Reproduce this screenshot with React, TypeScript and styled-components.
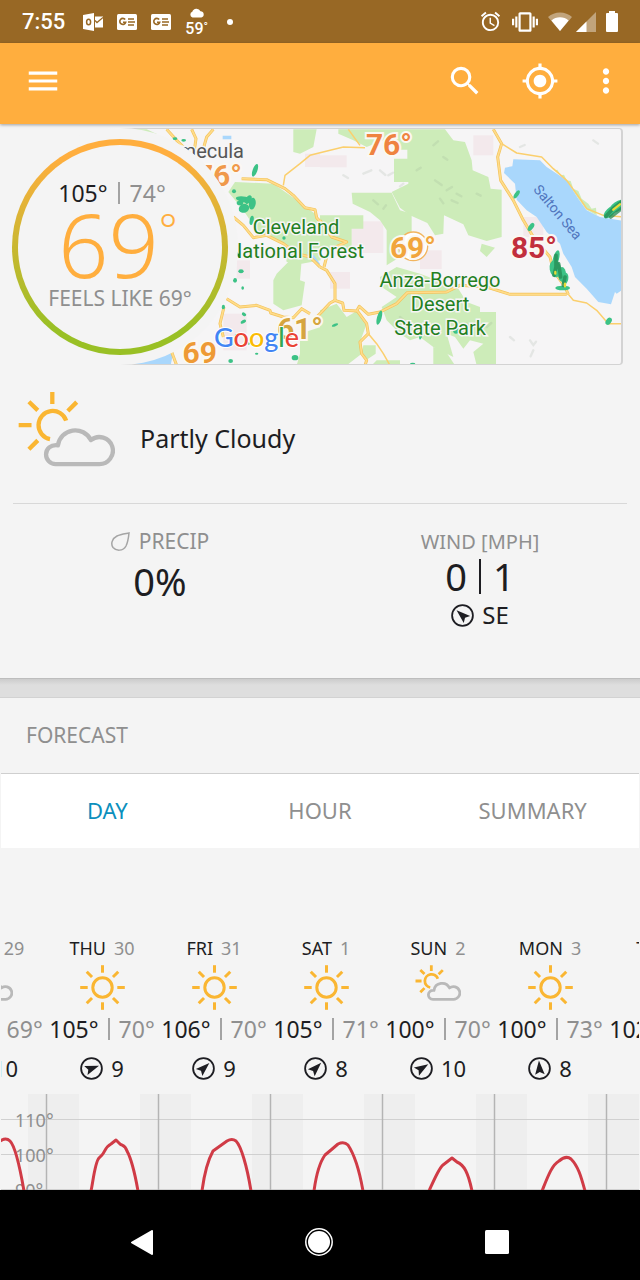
import React from "react";
import styled, { createGlobalStyle } from "styled-components";
import { MdAlarm, MdMenu, MdMoreVert, MdMyLocation, MdSearch, MdVibration } from "react-icons/md";

const color = {
  bar: "#ffae3e",
  status: "#986825",
  page: "#f4f4f4",
  ink: "#1d1d22",
  muted: "#8f8f8f",
  sun: "#fab632",
  cloud: "#b9b9b9",
  line: "#d8d8d8",
  accent: "#0b8fbd",
};

const GlobalStyle = createGlobalStyle`
  *, *::before, *::after { box-sizing: border-box; }
  body {
    margin: 0;
    background: ${color.page};
    color: ${color.ink};
    font-family: "Noto Sans", "Open Sans", sans-serif;
    overflow-x: hidden;
  }
  button {
    margin: 0;
    padding: 0;
    border: 0;
    background: none;
    font: inherit;
    color: inherit;
    cursor: pointer;
  }
  svg { display: block; }
`;

const Page = styled.div`
  min-height: 100vh;
  display: flex;
  flex-direction: column;
`;

/* ---------- status bar ---------- */

const StatusBar = styled.div`
  display: flex;
  align-items: center;
  justify-content: space-between;
  height: 43px;
  padding: 0 22px;
  background: ${color.status};
  color: #fff;
  font-family: Roboto, sans-serif;
`;

const StatusGroup = styled.div<{ $gap: number }>`
  display: flex;
  align-items: center;
  gap: ${(p) => p.$gap}px;
`;

const Clock = styled.span`
  font-size: 22px;
  line-height: 24px;
  font-weight: 500;
  margin-right: 4px;
`;

const MiniWeather = styled.span`
  display: flex;
  flex-direction: column;
  align-items: center;
  gap: 2px;
  font-size: 16px;
  line-height: 17px;
  font-weight: 500;
  padding-top: 2px;
`;

const Dot = styled.span`
  width: 6px;
  height: 6px;
  margin-left: 5px;
  border-radius: 50%;
  background: #fff;
`;

const MiniTemp = styled.span`
  display: flex;
`;

const MiniDegree = styled.span`
  font-size: 12px;
  line-height: 14px;
  font-weight: 400;
`;

/* ---------- app bar ---------- */

const AppBar = styled.header`
  display: flex;
  align-items: center;
  justify-content: space-between;
  height: 81px;
  padding: 0 15px 6px 24px;
  background: ${color.bar};
  color: #fff;
  box-shadow: 0 1px 3px rgba(0, 0, 0, 0.35);
  position: relative;
  z-index: 1;
`;

const Actions = styled.div`
  display: flex;
  gap: 28px;
`;

const IconButton = styled.button<{ $wide?: boolean }>`
  display: block;
  width: 38px;
  height: 38px;
  font-size: 38px;
  margin-right: ${(p) => (p.$wide ? 9 : 0)}px;
`;

/* ---------- current conditions ---------- */

const Current = styled.section`
  background: ${color.page};
  padding-bottom: 45px;
  border-bottom: 1px solid #bdbdbd;
`;

const Hero = styled.div`
  display: grid;
  grid-template-columns: 118px 118px 1fr;
  padding: 4px 17px 0 2px;
`;

const MapFrame = styled.div`
  grid-column: 2 / 4;
  grid-row: 1;
  height: 237px;
  overflow: hidden;
  border-radius: 0 4px 4px 0;
  border: solid #d3d3d3;
  border-width: 1px 2px 1px 0;
  background: #f6f5f6;

  & > svg {
    width: 100%;
    height: 100%;
  }
`;

const GaugeHalo = styled.div`
  grid-column: 1 / 3;
  grid-row: 1;
  display: flex;
  align-items: center;
  justify-content: center;
  height: 237px;
  border-radius: 50%;
  background: ${color.page};
  z-index: 1;
`;

const Gauge = styled.div`
  width: 216px;
  height: 216px;
  padding-top: 34px;
  border: 6px solid transparent;
  border-radius: 50%;
  background:
    linear-gradient(${color.page}, ${color.page}) padding-box,
    linear-gradient(#ffae3e 8%, #99c025 88%) border-box;
  display: flex;
  flex-direction: column;
  align-items: center;
`;

const Range = styled.div`
  display: flex;
  align-items: center;
  gap: 9px;
  font-size: 23px;
  line-height: 28px;
`;

const GaugeRange = styled(Range)`
  gap: 10px;
  padding-right: 16px;
`;

const Low = styled.span`
  color: ${color.muted};
`;

const Divider = styled.span`
  width: 2px;
  height: 22px;
  background: #a3a3a3;
`;

const Temperature = styled.div`
  display: flex;
  align-items: flex-start;
  padding-right: 4px;
  font-weight: 300;
  font-size: 88px;
  line-height: 74px;
  color: ${color.bar};
`;

const BigDegree = styled.span`
  font-size: 44px;
  line-height: 44px;
`;

const FeelsLike = styled.div`
  font-size: 21px;
  line-height: 34px;
  color: ${color.muted};
`;

const Condition = styled.div`
  display: flex;
  align-items: center;
  gap: 25px;
  margin: 0 13px;
  padding: 26px 5px 35px;
  border-bottom: 1px solid ${color.line};
`;

const ConditionName = styled.span`
  padding-top: 17px;
  font-size: 25px;
  line-height: 32px;
`;

const Stats = styled.div`
  display: grid;
  grid-template-columns: 1fr 1fr;
  padding-top: 24px;
`;

const Stat = styled.div`
  display: flex;
  flex-direction: column;
  align-items: center;
`;

const StatLabel = styled.div<{ $large?: boolean }>`
  display: flex;
  align-items: center;
  gap: 9px;
  font-size: ${(p) => (p.$large ? 21 : 20)}px;
  line-height: 27px;
  color: ${color.muted};
`;

const StatValue = styled.div<{ $compact?: boolean }>`
  display: flex;
  align-items: center;
  gap: ${(p) => (p.$compact ? 12 : 0)}px;
  font-size: 38px;
  line-height: ${(p) => (p.$compact ? 42 : 52)}px;
`;

const ValueRule = styled.span`
  width: 2px;
  height: 35px;
  background: ${color.ink};
`;

const WindRow = styled.div<{ $size: number }>`
  display: flex;
  align-items: center;
  justify-content: center;
  gap: 8px;
  font-size: ${(p) => p.$size}px;
  line-height: 36px;
`;

/* ---------- forecast ---------- */

const Gap = styled.div`
  height: 19px;
  background: linear-gradient(#cccccc, #dedede 6px);
  border-bottom: 1px solid #d2d2d2;
`;

const ForecastTitle = styled.h2`
  margin: 0;
  padding: 0 26px;
  font-size: 21px;
  line-height: 75px;
  font-weight: 400;
  color: ${color.muted};
`;

const Tabs = styled.div`
  display: grid;
  grid-template-columns: repeat(3, 1fr);
  margin: 0 1px;
  background: #fff;
  border-top: 1px solid #cfcfcf;
`;

const Tab = styled.button<{ $active?: boolean }>`
  height: 74px;
  padding-bottom: 3px;
  font-size: 22px;
  color: ${(p) => (p.$active ? color.accent : color.muted)};
`;

const Strip = styled.div`
  overflow: hidden;
  margin: 0 1px;
  padding-top: 87px;
`;

const Days = styled.div`
  display: flex;
  margin-left: -67px;
`;

const DayCell = styled.article`
  flex: 0 0 112px;
  display: flex;
  flex-direction: column;
  align-items: center;
  white-space: nowrap;
`;

const DayName = styled.div`
  display: flex;
  gap: 8px;
  font-size: 18px;
  line-height: 26px;
`;

const DayIcon = styled.div`
  height: 54px;
  padding-top: 4px;
`;

const DayWind = styled(WindRow)`
  padding-top: 7px;
`;

const ChartFrame = styled.div`
  height: 96px;
  margin: 8px 1px 0;
  overflow: hidden;

  & > svg {
    width: 100%;
    height: 100%;
  }
`;

const NavBar = styled.nav`
  display: grid;
  grid-template-columns: repeat(3, 1fr);
  justify-items: center;
  align-items: center;
  margin-top: auto;
  padding: 14px 54px 0 53px;
  height: 90px;
  background: #000;
`;

const NavButton = styled.button`
  height: 76px;
  padding: 0 12px;
`;

/* ---------- drawings ---------- */

const OutlookIcon = () => (
  <svg width="20" height="18" viewBox="0 0 20 18" aria-hidden>
    <path d="M0 2 L11 0 V18 L0 16Z" fill="#fff" />
    <path d="M12 3.5H20V14.5H12Z" fill="#fff" />
    <path d="M12 7.5 L14 9.5 L20 4.5" fill="none" stroke={color.status} strokeWidth="1.3" />
    <ellipse cx="5.6" cy="9" rx="2" ry="2.8" fill="none" stroke={color.status} strokeWidth="1.5" />
  </svg>
);

const NewsIcon = () => (
  <svg width="20" height="16" viewBox="0 0 20 16" aria-hidden>
    <rect width="20" height="16" rx="1.5" fill="#fff" />
    <path d="M8.2 5.6 A3 3 0 1 0 8.7 8.2 H6" fill="none" stroke={color.status} strokeWidth="1.6" />
    <path d="M11 5H17M11 8H18M11 11H17" stroke={color.status} strokeWidth="1.5" />
  </svg>
);

const MiniCloud = () => (
  <svg width="16" height="10" viewBox="0 0 16 10" aria-hidden>
    <path d="M3.5 9.5A3 3 0 0 1 3.3 3.8A4.4 4.4 0 0 1 11.5 3.2A3.2 3.2 0 0 1 12.3 9.5Z" fill="#fff" />
  </svg>
);

const WifiIcon = () => (
  <svg width="24" height="19" viewBox="0 0 24 19" aria-hidden>
    <path d="M0 5A18 18 0 0 1 24 5L12 19Z" fill="#fff" opacity="0.4" />
    <path d="M3.4 8.6A13 13 0 0 1 20.6 8.6L12 19Z" fill="#fff" />
  </svg>
);

const SignalIcon = () => (
  <svg width="20" height="20" viewBox="0 0 20 20" aria-hidden>
    <path d="M0 20L20 0V20Z" fill="#fff" opacity="0.4" />
    <path d="M0 20L10.5 9.5V20Z" fill="#fff" />
  </svg>
);

const BatteryIcon = () => (
  <svg width="12" height="21" viewBox="0 0 12 21" aria-hidden>
    <path d="M3 0H9V2H11Q12 2 12 3V20Q12 21 11 21H1Q0 21 0 20V3Q0 2 1 2H3Z" fill="#fff" />
  </svg>
);

const SunIcon = () => (
  <svg width="45" height="45" viewBox="-22.5 -22.5 45 45" aria-label="Sunny" role="img">
    <g fill="none" stroke={color.sun} strokeWidth="3">
      <circle r="9.7" />
      {[0, 45, 90, 135, 180, 225, 270, 315].map((a) => (
        <path key={a} d="M0 -14.8V-22.3" transform={`rotate(${a})`} />
      ))}
    </g>
  </svg>
);

const PartlyCloudyIcon = ({ width, stroke }: { width: number; stroke: number }) => (
  <svg
    width={width}
    height={Math.round((width * 232) / 294)}
    viewBox="51 31 294 232"
    aria-label="Partly cloudy"
    role="img"
  >
    <g fill="none" strokeWidth={stroke}>
      <g stroke={color.sun}>
        <path d="M148 176A43 43 0 1 1 197 120" />
        <path d="M155 33V70M53 134H92M84 63L111 89M229 64L202 91M111 180L84 207" />
      </g>
      <path
        stroke={color.cloud}
        d="M172 195C150 192 136 206 136 223A29 29 0 0 0 165 252H296A41 41 0 1 0 272 179A53 53 0 0 0 172 195Z"
        strokeLinejoin="round"
      />
    </g>
  </svg>
);

const DropIcon = () => (
  <svg width="19" height="19" viewBox="0 0 19 19" aria-hidden>
    <path
      d="M18 1C17.5 6 17 10 15 14C12 19.5 5 19 2 15.5C-0.5 12 1 6.5 6 4C9.5 2.3 14 1.8 18 1Z"
      fill="none"
      stroke="#a5a5a5"
      strokeWidth="1.5"
    />
  </svg>
);

const WindArrow = ({ angle }: { angle: number }) => (
  <svg width="23" height="23" viewBox="-11.5 -11.5 23 23" aria-hidden>
    <circle r="10.4" fill="none" stroke={color.ink} strokeWidth="1.8" />
    <path d="M0 -8L4.8 6L0 3.4L-4.8 6Z" fill={color.ink} transform={`rotate(${angle})`} />
  </svg>
);

const westRoads = [
  "M725 175L800 178 855 205 880 225 915 262 945 268 950 292 975 320",
  "M700 290L730 315 760 352 800 345 850 370 890 400 930 410 960 440",
  "M680 535L720 560 770 555 810 570 812 578 850 590 880 592 905 565 930 580",
  "M500 27L530 60 570 100",
  "M575 27L588 55 580 110",
  "M640 27L620 50 610 85",
  "M672 560L660 610 670 650",
  "M515 695L530 735",
];

const eastRoads = [
  "M-20 600L5 575 30 548 45 540 68 548 72 570 110 572 118 558 145 582 180 575 230 550 262 517 380 515 420 495 500 500 570 522H740",
  "M0 440L20 450 45 490 45 540",
  "M12 440L25 390 80 365 35 350 0 300",
  "M112 572L140 610 145 640 120 665 125 700 140 720 135 735",
  "M520 27L545 70 533 110 542 180 580 240 610 300 640 350 690 410 700 450 735 500 745 522",
];

const thinRoads = [
  "M-110 195L-105 165 -60 130 -30 105 0 97 70 80 135 82",
  "M85 27L120 75",
  "M545 70L590 98 665 110 700 145 740 180 780 235 800 265 850 285 908 290",
  "M745 522L760 540 800 548 830 570 865 610H910",
  "M145 640L170 670 190 700 210 735",
];

const westParks = [
  "M685 215L705 185 820 190 870 225 945 280 962 300V420L905 430 860 425 850 370 770 330 730 270Z",
  "M830 460L870 420 905 420 900 480 915 485 905 555 850 570 820 550V480Z",
  "M880 27H950L940 80 900 100 880 95Z",
  "M900 640L962 620V735H890L900 700Z",
  "M380 27H440L472 42Z",
];

const eastParks = [
  "M55 27H375L400 60 435 65 455 120 458 150 505 170 512 205 545 208V350L500 362 445 345 430 312 372 285 370 340 345 345 322 308 270 285 240 262 215 215 265 190V185H222V115H262V88H230V60H190L140 80 100 60 55 40Z",
  "M95 217H215L240 270 275 280V385L240 410 200 435V330L180 300 150 275 98 250Z",
  "M485 370L525 382 500 410 480 392Z",
  "M180 470L230 440 300 460 380 490 415 505 440 545 480 560V575H528V735H470L460 695 490 670 450 660 430 685 405 650 380 640 400 710 340 680 300 650 270 660 240 640 200 600 185 560 230 530 185 500Z",
  "M0 570L50 550 80 590 110 572 140 610 120 665 125 700 80 735H0Z",
  "M130 675H167V700L140 718 125 700Z",
  "M340 680L375 690 405 735H340Z",
  "M170 720H240V735H155Z",
  "M0 285H130V325H95V385H0Z",
];

/* [cx, cy, rx, ry, tilt] */
const rain = [
  [-195, 150, 7, 20, 20], [-225, 238, 28, 9, 10], [-228, 264, 16, 13, -20], [-203, 250, 10, 18, 10],
  [-240, 248, 10, 7, 0], [-215, 238, 8, 14, 30],
  [-258, 213, 6, 6, 0], [-237, 453, 8, 6, 0], [-255, 480, 6, 7, 0], [-232, 503, 4, 5, 0],
  [-228, 582, 7, 5, 30], [-230, 604, 9, 5, -30], [-75, 712, 10, 8, 0], [-268, 722, 7, 6, 0],
  [-290, 560, 5, 7, 0], [-205, 300, 6, 14, 10], [-108, 353, 5, 5, 0], [-190, 700, 5, 3, 0],
  [-435, 55, 7, 4, 0], [-409, 60, 7, 4, 0], [-248, 645, 8, 4, 0], [-218, 668, 8, 4, 20],
  [590, 222, 6, 14, 35], [633, 320, 7, 14, 35], [708, 415, 9, 26, 15], [706, 445, 17, 26, -10],
  [726, 462, 12, 22, 0], [735, 475, 10, 18, 10], [728, 503, 22, 7, 0], [178, 592, 7, 22, 15],
  [866, 603, 8, 12, 35], [45, 614, 10, 4, -20], [278, 731, 8, 4, 0], [303, 640, 5, 18, 10],
  [408, 628, 9, 12, 0], [870, 275, 12, 24, 45], [892, 258, 14, 28, 55],
];

/* [x, y, width, height] */
const pinkAreas = [
  [95, 303, 95, 95], [0, 105, 80, 36], [300, 390, 65, 56], [460, 45, 60, 60], [-45, 100, 45, 40],
  [-250, 420, 40, 55], [30, 455, 60, 50], [-290, 580, 70, 110], [610, 290, 60, 60],
];

const hills =
  "M340 75l14-12M370 110l12 8M345 180l20 14M380 210l16-10M410 220l14 8M360 235l10 14M395 240l18 8M470 220l12 6M130 160l24-10M180 150l16 14M205 165l14-8M70 165l14 8M290 150l12-8M250 190l-10 8M160 240l14 12M190 265l8-10M240 590l14 12M330 620l16-6M440 610l10 10M500 620l14-12M570 650l12 10M630 660l10 14 8-10M640 690l-8 18M600 80l14-6M820 60l14 10";

const Place = styled.text`
  font-family: Roboto, sans-serif;
  font-size: 20px;
  fill: #23801f;
  stroke: #f6f5f6;
  stroke-width: 3px;
  paint-order: stroke;
  text-anchor: middle;
`;

const Town = styled(Place)`
  fill: #555;
  text-anchor: end;
`;

const Water = styled(Place)`
  font-size: 14px;
  fill: #4f74bd;
  stroke: none;
`;

const Reading = styled.text`
  font-family: Roboto, sans-serif;
  font-size: 30px;
  font-weight: 700;
  stroke: #fbf8f2;
  stroke-width: 4px;
  paint-order: stroke;
  text-anchor: end;
`;

const Logo = styled.text`
  font-family: Lato, sans-serif;
  font-size: 27px;
  font-weight: 500;
  stroke: #fff;
  stroke-width: 2px;
  paint-order: stroke;
`;

const RegionMap = () => (
  <svg viewBox="0 0 503 235" preserveAspectRatio="xMinYMin slice" role="img" aria-label="Temperature map">
    <g transform="scale(0.33333) translate(600 -26)">
      <g fill="#f3e9ec">
        {pinkAreas.map(([x, y, w, h]) => (
          <rect key={`${x},${y}`} x={x} y={y} width={w} height={h} />
        ))}
      </g>
      <g fill="#cdecb9">
        {westParks.map((d) => (
          <path key={d} d={d} transform="translate(-960 0)" />
        ))}
        {eastParks.map((d) => (
          <path key={d} d={d} />
        ))}
      </g>
      <path d={hills} fill="none" stroke="#8a9a86" strokeOpacity="0.16" strokeWidth="7" strokeLinecap="round" />
      <g fill="#a9d7fc">
        <path d="M580 117L660 120 680 140 740 180 775 235 800 270 840 290 912 302V505L890 520 885 515 873 552 835 545 800 505 765 470 755 440 730 400 720 370 680 335 650 290 620 270 590 238 585 190 552 158 555 142 577 138Z" />
        <path d="M-580 735L-520 720 -440 695 -448 735Z" />
        <path d="M-40 395L-18 405 0 430 -5 440Z" />
        <path d="M-292 46H-266V57H-292Z" />
      </g>
      <path
        d="M690 140L705 150 712 148 722 165 732 163 740 180 752 182 760 205 775 212 785 235 805 250 815 265 828 262 830 285 800 268 775 235 740 180Z"
        fill="#cdecb9"
      />
      {[
        { stroke: "#f3c35c", width: 9 },
        { stroke: "#ffdc8a", width: 5 },
      ].map((pass) => (
        <g key={pass.width} fill="none" stroke={pass.stroke} strokeWidth={pass.width} strokeLinejoin="round">
          {westRoads.map((d) => (
            <path key={d} d={d} transform="translate(-960 0)" />
          ))}
          {eastRoads.map((d) => (
            <path key={d} d={d} />
          ))}
        </g>
      ))}
      <g fill="none" stroke="#fbcf6d" strokeWidth="4.5" strokeLinejoin="round">
        {thinRoads.map((d) => (
          <path key={d} d={d} />
        ))}
      </g>
      <g fill="#3cc286">
        {rain.map(([cx, cy, rx, ry, tilt]) => (
          <ellipse key={`${cx},${cy}`} cx={cx} cy={cy} rx={rx} ry={ry} transform={`rotate(${tilt} ${cx} ${cy})`} />
        ))}
      </g>
      <path
        d="M708 405V440L702 465M716 430L722 470M735 470L730 495M858 288L880 264 908 242M872 290L908 262"
        fill="none"
        stroke="#258a52"
        strokeOpacity="0.75"
        strokeWidth="11"
        strokeLinecap="round"
      />
      <path d="M880 268L900 252M706 455V460M735 490V498" stroke="#e6dc3a" strokeWidth="7" strokeLinecap="round" />
      <circle cx="280" cy="378" r="43" fill="#fff" stroke="#f2b55f" strokeWidth="4" />
    </g>
    <Town x="124" y="29">Temecula</Town>
    <Reading x="122" y="57" fill="#f0994a">76°</Reading>
    <Place x="176" y="105">Cleveland</Place>
    <Place x="176" y="129">National Forest</Place>
    <Place x="320" y="158">Anza-Borrego</Place>
    <Place x="320" y="182">Desert</Place>
    <Place x="320" y="206">State Park</Place>
    <Water x="0" y="5" transform="translate(438 83) rotate(50)">Salton Sea</Water>
    <Reading x="292" y="26" fill="#ef8340">76°</Reading>
    <Reading x="316" y="129" fill="#f1a53c">69°</Reading>
    <Reading x="437" y="129" fill="#c22f3c">85°</Reading>
    <Reading x="203" y="210" fill="#d6a53f">61°</Reading>
    <Reading x="97" y="234" fill="#ee9a35">69</Reading>
    <Logo x="94" y="218">
      <tspan fill="#4285f4">G</tspan>
      <tspan fill="#ea4335">o</tspan>
      <tspan fill="#fbbc05">o</tspan>
      <tspan fill="#4285f4">g</tspan>
      <tspan fill="#34a853">l</tspan>
      <tspan fill="#ea4335">e</tspan>
    </Logo>
  </svg>
);

const AxisLabel = styled.text`
  font-size: 18px;
  fill: #8f8f8f;
`;

const dayLines = [45, 157, 269, 381, 493, 605];

const curves = [
  "M-1 47Q5 43 9 47C14 52 18 68 23 97",
  "M90 97C92 88 94 68 98 64L101 61C104 58 104 53 110 50L115 46 119 50C122 52 124 51 126 57C131 66 134 80 137 97",
  "M201 97C203 82 207 66 212 57L219 52 226 47Q231 44 235 47C240 52 246 72 250 97",
  "M313 97C315 82 319 68 324 61L330 56 337 50Q343 47 347 51C353 60 358 74 362 97",
  "M428 97C433 86 438 74 442 71L451 64 456 68C463 71 467 78 471 97",
  "M541 97C547 82 551 71 558 67Q565 61 570 65C577 72 580 82 584 97",
];

const TemperatureChart = () => (
  <svg viewBox="0 0 638 96" preserveAspectRatio="xMinYMin slice" role="img" aria-label="Temperature by day">
    {dayLines.map((x) => (
      <rect key={x} x={x - 18} y="0" width="51" height="96" fill="#eeeeee" />
    ))}
    <path d="M0 25.5H638M0 60.5H638M0 95.5H638" stroke="#d0d0d0" />
    {dayLines.map((x) => (
      <path key={x} d={`M${x}.5 0V96`} stroke="#b4b4b4" strokeWidth="1.5" />
    ))}
    <AxisLabel x="14" y="33">110°</AxisLabel>
    <AxisLabel x="14" y="68">100°</AxisLabel>
    <AxisLabel x="14" y="103">90°</AxisLabel>
    <g fill="none" stroke="#d03b46" strokeWidth="3" strokeLinejoin="round">
      {curves.map((d) => (
        <path key={d} d={d} />
      ))}
    </g>
  </svg>
);

const days = [
  { day: "WED", date: 29, high: 103, low: 69, wind: 10, angle: 60, cloudy: true },
  { day: "THU", date: 30, high: 105, low: 70, wind: 9, angle: 70, cloudy: false },
  { day: "FRI", date: 31, high: 106, low: 70, wind: 9, angle: 47, cloudy: false },
  { day: "SAT", date: 1, high: 105, low: 71, wind: 8, angle: 45, cloudy: false },
  { day: "SUN", date: 2, high: 100, low: 70, wind: 10, angle: 58, cloudy: true },
  { day: "MON", date: 3, high: 100, low: 73, wind: 8, angle: -4, cloudy: false },
  { day: "TUE", date: 4, high: 102, low: 73, wind: 9, angle: 20, cloudy: false },
];

export default function App() {
  return (
    <Page>
      <GlobalStyle />
      <StatusBar>
        <StatusGroup $gap={14}>
          <Clock>7:55</Clock>
          <OutlookIcon />
          <NewsIcon />
          <NewsIcon />
          <MiniWeather>
            <MiniCloud />
            <MiniTemp>
              59<MiniDegree>°</MiniDegree>
            </MiniTemp>
          </MiniWeather>
          <Dot />
        </StatusGroup>
        <StatusGroup $gap={10}>
          <MdAlarm size={23} />
          <MdVibration size={26} />
          <StatusGroup $gap={4}>
            <WifiIcon />
            <SignalIcon />
          </StatusGroup>
          <BatteryIcon />
        </StatusGroup>
      </StatusBar>

      <AppBar>
        <IconButton aria-label="Menu"><MdMenu /></IconButton>
        <Actions>
          <IconButton aria-label="Search" $wide><MdSearch /></IconButton>
          <IconButton aria-label="My location"><MdMyLocation /></IconButton>
          <IconButton aria-label="More options"><MdMoreVert /></IconButton>
        </Actions>
      </AppBar>

      <Current>
        <Hero>
          <MapFrame>
            <RegionMap />
          </MapFrame>
          <GaugeHalo>
            <Gauge>
              <GaugeRange>
                <span>105°</span>
                <Divider />
                <Low>74°</Low>
              </GaugeRange>
              <Temperature>
                69<BigDegree>°</BigDegree>
              </Temperature>
              <FeelsLike>FEELS LIKE 69°</FeelsLike>
            </Gauge>
          </GaugeHalo>
        </Hero>

        <Condition>
          <PartlyCloudyIcon width={97} stroke={13} />
          <ConditionName>Partly Cloudy</ConditionName>
        </Condition>

        <Stats>
          <Stat>
            <StatLabel $large><DropIcon />PRECIP</StatLabel>
            <StatValue>0%</StatValue>
          </Stat>
          <Stat>
            <StatLabel>WIND [MPH]</StatLabel>
            <StatValue $compact>
              <span>0</span>
              <ValueRule />
              <span>1</span>
            </StatValue>
            <WindRow $size={24}>
              <WindArrow angle={-48} />
              SE
            </WindRow>
          </Stat>
        </Stats>
      </Current>

      <Gap />

      <section>
        <ForecastTitle>FORECAST</ForecastTitle>
        <Tabs role="tablist">
          <Tab role="tab" aria-selected $active>DAY</Tab>
          <Tab role="tab" aria-selected={false}>HOUR</Tab>
          <Tab role="tab" aria-selected={false}>SUMMARY</Tab>
        </Tabs>
        <Strip>
          <Days>
            {days.map((d) => (
              <DayCell key={d.day}>
                <DayName>
                  <span>{d.day}</span>
                  <Low>{d.date}</Low>
                </DayName>
                <DayIcon>
                  {d.cloudy ? <PartlyCloudyIcon width={46} stroke={18} /> : <SunIcon />}
                </DayIcon>
                <Range>
                  <span>{d.high}°</span>
                  <Divider />
                  <Low>{d.low}°</Low>
                </Range>
                <DayWind $size={22}>
                  <WindArrow angle={d.angle} />
                  {d.wind}
                </DayWind>
              </DayCell>
            ))}
          </Days>
        </Strip>
        <ChartFrame>
          <TemperatureChart />
        </ChartFrame>
      </section>

      <NavBar>
        <NavButton aria-label="Back">
          <svg width="22" height="25" viewBox="0 0 22 25">
            <path d="M21 1V24L1 12.5Z" fill="#fff" stroke="#fff" strokeWidth="2" strokeLinejoin="round" />
          </svg>
        </NavButton>
        <NavButton aria-label="Home">
          <svg width="28" height="28" viewBox="0 0 28 28">
            <circle cx="14" cy="14" r="13.2" fill="none" stroke="#fff" strokeWidth="1.5" />
            <circle cx="14" cy="14" r="11" fill="#fff" />
          </svg>
        </NavButton>
        <NavButton aria-label="Recent apps">
          <svg width="24" height="24" viewBox="0 0 24 24">
            <rect width="24" height="24" rx="1.5" fill="#fff" />
          </svg>
        </NavButton>
      </NavBar>
    </Page>
  );
}
